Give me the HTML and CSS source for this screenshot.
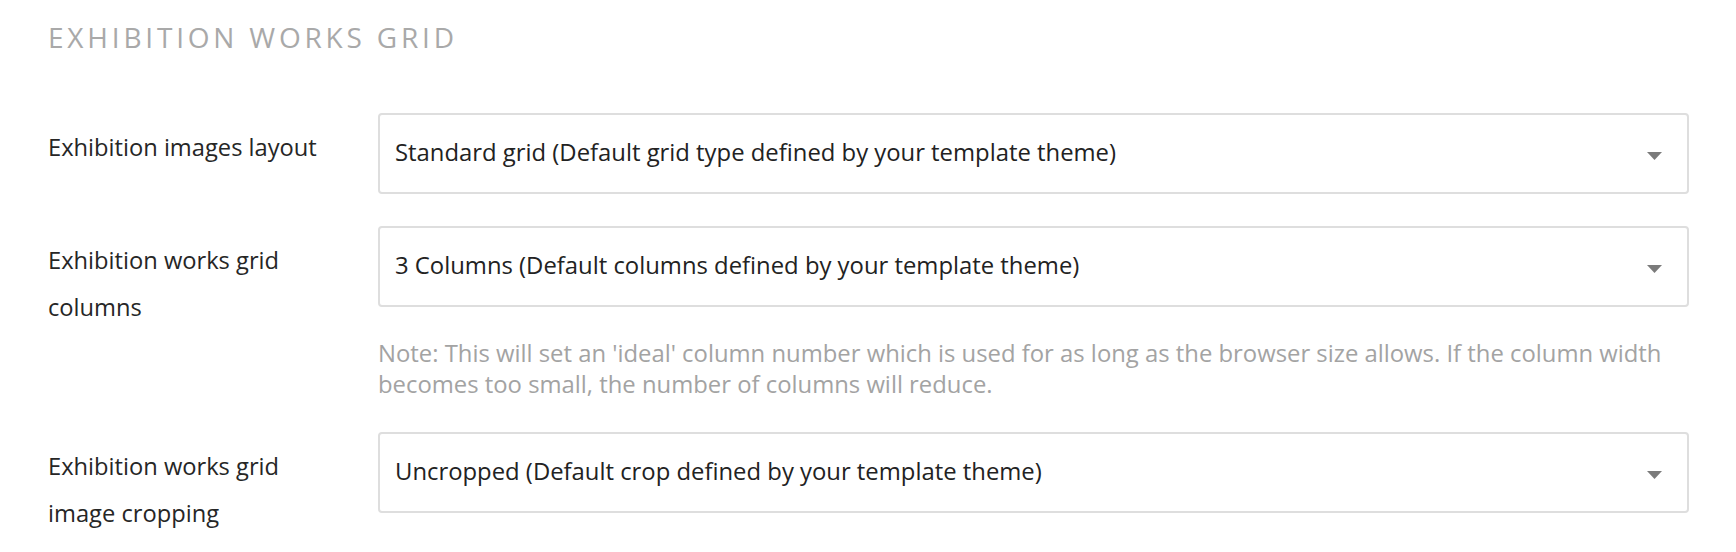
FILE: index.html
```html
<!DOCTYPE html>
<html lang="en">
<head>
<meta charset="utf-8">
<title>Exhibition works grid</title>
<link rel="stylesheet" href="styles.css">
</head>
<body>
<main class="panel">
  <h2 class="section-title">EXHIBITION WORKS GRID</h2>

  <div class="field">
    <label class="field-label">Exhibition images layout</label>
    <div class="field-control">
      <div class="select">
        <span class="select-value">Standard grid (Default grid type defined by your template theme)</span>
        <svg class="select-arrow" width="15" height="8" viewBox="0 0 15 8"><path d="M0 0H15L7.5 8Z"/></svg>
      </div>
    </div>
  </div>

  <div class="field">
    <label class="field-label">Exhibition works grid columns</label>
    <div class="field-control">
      <div class="select">
        <span class="select-value">3 Columns (Default columns defined by your template theme)</span>
        <svg class="select-arrow" width="15" height="8" viewBox="0 0 15 8"><path d="M0 0H15L7.5 8Z"/></svg>
      </div>
      <p class="field-note">Note: This will set an 'ideal' column number which is used for as long as the browser size allows. If the column width becomes too small, the number of columns will reduce.</p>
    </div>
  </div>

  <div class="field">
    <label class="field-label">Exhibition works grid image cropping</label>
    <div class="field-control">
      <div class="select">
        <span class="select-value">Uncropped (Default crop defined by your template theme)</span>
        <svg class="select-arrow" width="15" height="8" viewBox="0 0 15 8"><path d="M0 0H15L7.5 8Z"/></svg>
      </div>
    </div>
  </div>
</main>
</body>
</html>
```

FILE: styles.css
```css
html, body {
  margin: 0;
  padding: 0;
  background: #ffffff;
}

body {
  font-family: "Open Sans", "Noto Sans", sans-serif;
  color: #262626;
}

.panel {
  padding: 18px 47px 0 48px;
}

.section-title {
  margin: 0 0 57px 0;
  font-size: 28px;
  font-weight: 400;
  line-height: normal;
  letter-spacing: 3.8px;
  color: #a9a9a9;
}

.field {
  display: flex;
  align-items: flex-start;
  margin-bottom: 32px;
}

.field-label {
  flex: 0 0 330px;
  width: 330px;
  padding-top: 11px;
  padding-right: 40px;
  box-sizing: border-box;
  font-size: 23.7px;
  line-height: 47px;
  color: #262626;
}

.field-control {
  flex: 1 1 auto;
  min-width: 0;
}

.select {
  display: flex;
  align-items: center;
  justify-content: space-between;
  height: 81px;
  box-sizing: border-box;
  padding: 0 25px 0 15px;
  border: 2px solid #dedede;
  border-radius: 4px;
  background: #ffffff;
}

.select-value {
  font-size: 23.85px;
  line-height: 32px;
  margin-bottom: 3px;
  color: #222222;
  white-space: nowrap;
}

.select-arrow {
  flex: 0 0 auto;
  margin-top: 5px;
  fill: #7b7b7b;
}

.field-note {
  margin: 31px 0 1px 0;
  font-size: 23.85px;
  line-height: 30.5px;
  color: #a3a3a3;
}
```
